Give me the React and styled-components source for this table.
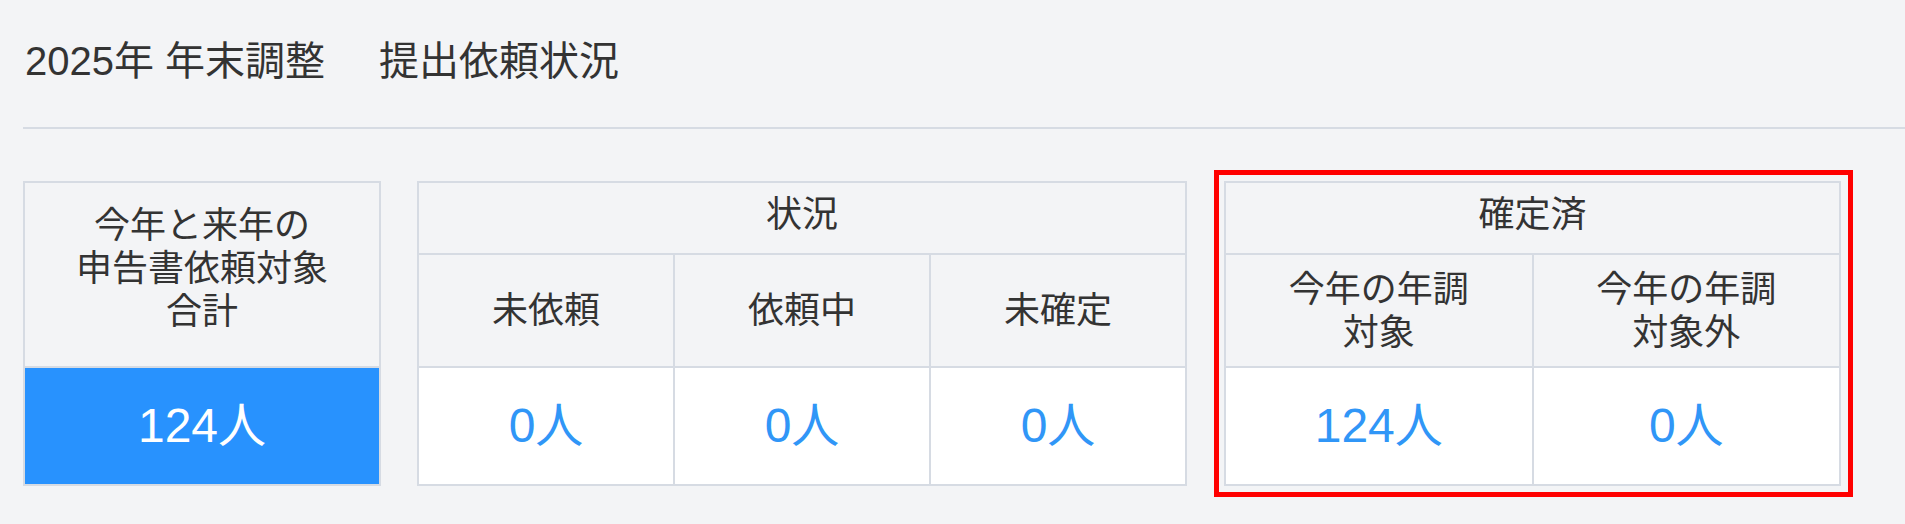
import styled, { createGlobalStyle } from "styled-components";

const GlobalStyle = createGlobalStyle`
  html, body {
    margin: 0;
    padding: 0;
    background: #f3f4f6;
  }
  body {
    font-family: "Liberation Sans", "Noto Sans CJK JP", sans-serif;
    color: #333333;
  }
`;

const Page = styled.main`
  padding: 0 0 0 23px;
`;

const Header = styled.header`
  padding: 37px 0 42px;
  border-bottom: 2px solid #d6dbe3;
`;

const Title = styled.h1`
  margin: 0;
  font-size: 40px;
  line-height: 48px;
  font-weight: 400;
  color: #333333;
  padding-left: 2px;
`;

const TitleSub = styled.span`
  margin-left: 54px;
`;

const Row = styled.section`
  display: flex;
  align-items: center;
  margin-top: 41px;
`;

const Table = styled.div`
  display: grid;
  grid-template-columns: repeat(${({ $cols }) => $cols}, 1fr);
  grid-template-rows: ${({ $rows }) => $rows};
  gap: 2px;
  padding: 2px;
  background: #d6dbe3;
  width: ${({ $width }) => $width}px;
  height: 305px;
  box-sizing: border-box;
  margin-right: ${({ $gap }) => $gap || 0}px;
`;

const Highlight = styled.div`
  border: 5px solid #ff0000;
  padding: 6px 7px 6px 5px;
`;

const Cell = styled.div`
  grid-column: span ${({ $span }) => $span || 1};
  display: flex;
  align-items: center;
  justify-content: center;
  text-align: center;
  box-sizing: border-box;
  font-size: ${({ $value }) => ($value ? "48px" : "36px")};
  line-height: ${({ $value }) => ($value ? "56px" : "43px")};
  padding-bottom: ${({ $lift }) => $lift || 0}px;
  background: ${({ $value, $total }) =>
    $total ? "#2892fe" : $value ? "#ffffff" : "#f3f4f6"};
  color: ${({ $value, $total }) =>
    $total ? "#ffffff" : $value ? "#3096f7" : "#333333"};
`;

const statusCols = [
  { label: "未依頼", count: 0 },
  { label: "依頼中", count: 0 },
  { label: "未確定", count: 0 },
];

const fixedCols = [
  { label: ["今年の年調", "対象"], count: 124 },
  { label: ["今年の年調", "対象外"], count: 0 },
];

export default function App() {
  return (
    <>
      <GlobalStyle />
      <Page>
        <Header>
          <Title>
            2025年 年末調整
            <TitleSub>提出依頼状況</TitleSub>
          </Title>
        </Header>
        <Row>
          <Table $cols={1} $rows="183px 116px" $width={358} $gap={36}>
            <Cell $lift={12}>
              今年と来年の
              <br />
              申告書依頼対象
              <br />
              合計
            </Cell>
            <Cell $value $total>
              124人
            </Cell>
          </Table>
          <Table $cols={3} $rows="70px 111px 116px" $width={770} $gap={27}>
            <Cell $span={3} $lift={8}>
              状況
            </Cell>
            {statusCols.map((c) => (
              <Cell key={c.label}>{c.label}</Cell>
            ))}
            {statusCols.map((c) => (
              <Cell key={c.label + "v"} $value>
                {c.count}人
              </Cell>
            ))}
          </Table>
          <Highlight>
            <Table $cols={2} $rows="70px 111px 116px" $width={617}>
              <Cell $span={2} $lift={8}>
                確定済
              </Cell>
              {fixedCols.map((c) => (
                <Cell key={c.label.join()}>
                  {c.label[0]}
                  <br />
                  {c.label[1]}
                </Cell>
              ))}
              {fixedCols.map((c) => (
                <Cell key={c.label.join() + "v"} $value>
                  {c.count}人
                </Cell>
              ))}
            </Table>
          </Highlight>
        </Row>
      </Page>
    </>
  );
}
